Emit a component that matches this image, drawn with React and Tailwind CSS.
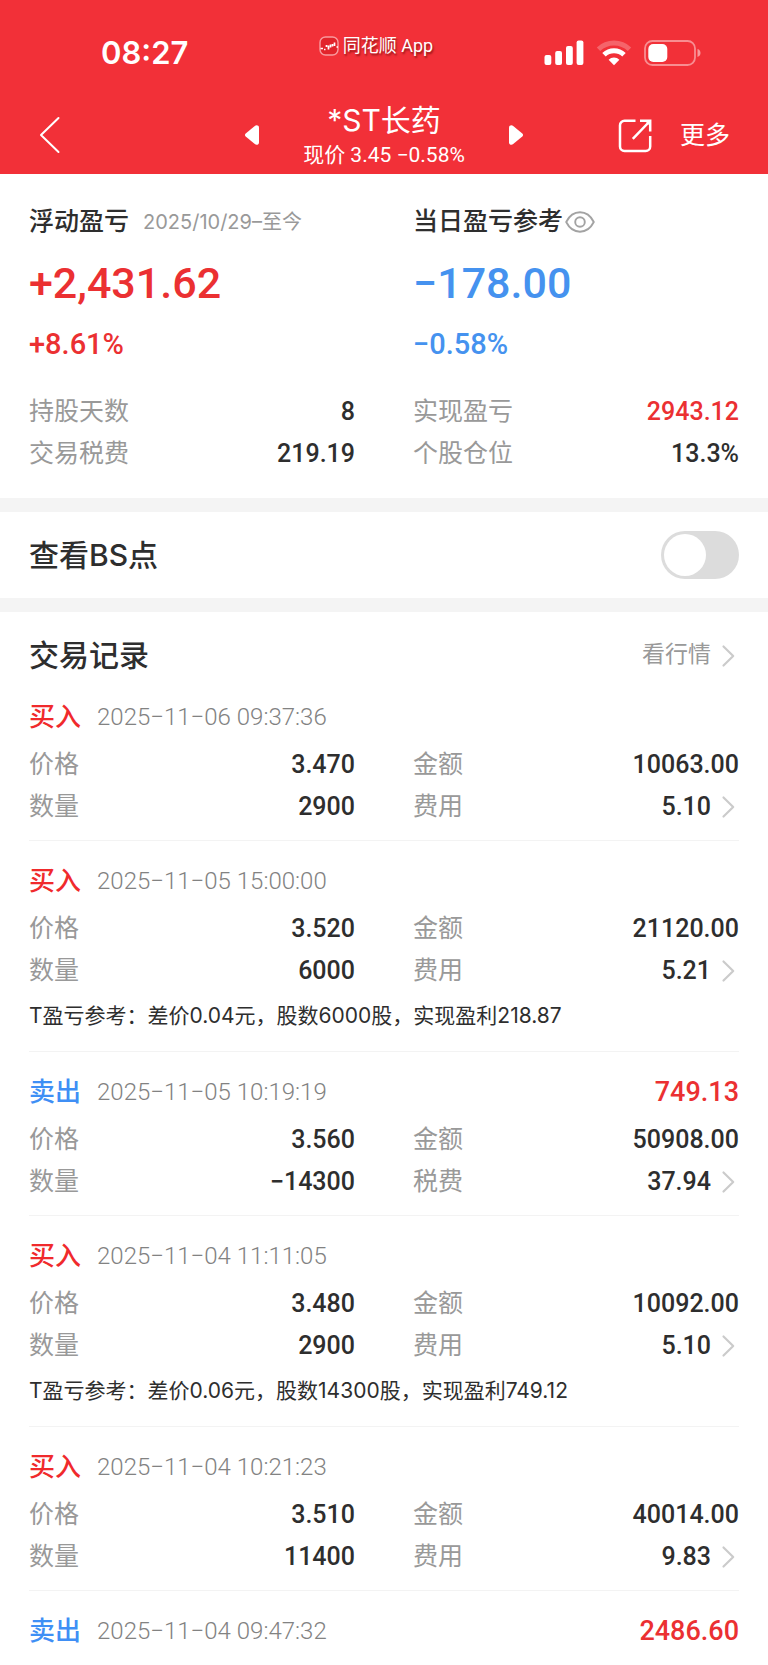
import React, { useState } from "react";

const BUY = "买入";
const SELL = "卖出";

const records = [
  { side: BUY, time: "2025−11−06 09:37:36", price: "3.470", count: "2900", amount: "10063.00", feeLabel: "费用", fee: "5.10" },
  { side: BUY, time: "2025−11−05 15:00:00", price: "3.520", count: "6000", amount: "21120.00", feeLabel: "费用", fee: "5.21", note: "T盈亏参考：差价0.04元，股数6000股，实现盈利218.87" },
  { side: SELL, time: "2025−11−05 10:19:19", profit: "749.13", price: "3.560", count: "−14300", amount: "50908.00", feeLabel: "税费", fee: "37.94" },
  { side: BUY, time: "2025−11−04 11:11:05", price: "3.480", count: "2900", amount: "10092.00", feeLabel: "费用", fee: "5.10", note: "T盈亏参考：差价0.06元，股数14300股，实现盈利749.12" },
  { side: BUY, time: "2025−11−04 10:21:23", price: "3.510", count: "11400", amount: "40014.00", feeLabel: "费用", fee: "9.83" },
  { side: SELL, time: "2025−11−04 09:47:32", profit: "2486.60" },
];

function Chevron() {
  return (
    <svg aria-hidden="true" className="h-6 w-6 shrink-0" viewBox="0 0 24 24" fill="none" stroke="#cbcbcb" strokeWidth="2.200">
      <path d="M8.500 2.500 18.200 12 8.500 21.500" strokeLinecap="round" strokeLinejoin="round" />
    </svg>
  );
}

function Item({ label, value, tone = "text-[#2e2e2e]", more = false }) {
  return (
    <div className="flex h-[42px] items-center justify-between text-[25px]">
      <dt className="text-[#999999]">{label}</dt>
      <dd className={`flex items-center gap-1 font-medium ${tone}`}>
        {value}
        {more && (
          <button type="button" aria-label="查看明细" className="flex">
            <Chevron />
          </button>
        )}
      </dd>
    </div>
  );
}

function StatusBar() {
  return (
    <div className="grid h-24 grid-cols-[1fr_auto_1fr] items-center pt-2.5">
      <div className="pl-[101px] font-['Inter',sans-serif] text-[31px] font-semibold leading-10">08:27</div>
      <div className="mr-4 flex items-center gap-1 self-start pt-[26px] text-[18px] leading-5 [text-shadow:1px_2px_2px_rgba(90,0,0,0.6)]">
        <svg aria-hidden="true" className="h-5 w-5" viewBox="0 0 20 20" fill="none">
          <rect x="1" y="1" width="18" height="18" rx="5.5" fill="#e2242b" stroke="#f99a9e" strokeWidth="1.4" />
          <path d="M1.500 12.500h2.500M5 13.500h1.500M7.500 9v2M9.500 9.500v4M11.500 8.500v3M13.500 8v2.500M15.500 6.500v3.500M17.500 11h1.500" stroke="#fff" strokeWidth="1.700" />
        </svg>
        <span>同花顺 App</span>
      </div>
      <div className="flex items-center justify-end gap-3 pr-[66px]">
        <svg aria-hidden="true" className="h-[26px] w-10" viewBox="0 0 40 26" fill="#fff">
          <rect x="0.500" y="15" width="6.800" height="10" rx="2" />
          <rect x="11.200" y="11" width="6.800" height="14" rx="2" />
          <rect x="22" y="6" width="6.800" height="19" rx="2" />
          <rect x="32.600" y="0.500" width="6.800" height="24.500" rx="2" />
        </svg>
        <svg aria-hidden="true" className="h-[26px] w-[36px]" viewBox="0 0 36 26" fill="none">
          <path d="M2.500 9.300a22.500 22.500 0 0 1 31 0" stroke="#fff" strokeOpacity="0.250" strokeWidth="5" />
          <path d="M8 14.800a14.500 14.500 0 0 1 20 0" stroke="#fff" strokeWidth="5" />
          <path d="M12.600 19.700a7.800 7.800 0 0 1 10.800 0L18 25.200Z" fill="#fff" />
        </svg>
        <svg aria-hidden="true" className="h-[26px] w-[58px]" viewBox="0 0 58 26" fill="none">
          <rect x="1" y="1" width="50" height="24" rx="7.500" stroke="#fff" strokeOpacity="0.450" strokeWidth="1.800" />
          <rect x="4.300" y="4" width="19" height="18" rx="5" fill="#fff" />
          <path d="M53.500 9v8c2-.6 3-2.200 3-4s-1-3.400-3-4Z" fill="#fff" fillOpacity="0.500" />
        </svg>
      </div>
    </div>
  );
}

function NavBar() {
  return (
    <nav className="grid h-[78px] grid-cols-[1fr_auto_1fr] items-center px-[38px]">
      <button type="button" aria-label="返回" className="justify-self-start">
        <svg className="h-[38px] w-6" viewBox="0 0 24 38" fill="none" stroke="#fff" strokeWidth="2">
          <path d="M20.500 2 3 19l17.500 17" strokeLinecap="round" strokeLinejoin="round" />
        </svg>
      </button>
      <div className="flex w-[280px] items-center justify-between">
        <button type="button" aria-label="上一只">
          <svg className="h-5 w-4" viewBox="0 0 16 20" fill="#fff">
            <path d="M1.700 8.500 10.800.9C12.400-.4 15 .4 15 2.600v14.800c0 2.200-2.600 3-4.200 1.700L1.700 11.500c-1-.9-1-2.100 0-3Z" />
          </svg>
        </button>
        <div className="pt-0.5 text-center">
          <h1 className="font-['Inter','Noto_Sans_CJK_SC',sans-serif] text-[30px] leading-[38px]">*ST长药</h1>
          <p className="text-[21px] leading-8">现价 3.45 −0.58%</p>
        </div>
        <button type="button" aria-label="下一只">
          <svg className="h-5 w-4" viewBox="0 0 16 20" fill="#fff">
            <path d="M14.300 8.500 5.200.9C3.600-.4 1 .4 1 2.600v14.800c0 2.200 2.600 3 4.200 1.700l9.100-7.600c1-.9 1-2.100 0-3Z" />
          </svg>
        </button>
      </div>
      <div className="flex items-center justify-end gap-7 pt-0.5">
        <button type="button" aria-label="分享">
          <svg className="h-[34px] w-[34px]" viewBox="0 0 34 34" fill="none" stroke="#fff" strokeWidth="2.500">
            <path d="M17.500 1.800H6.500a4.500 4.500 0 0 0-4.500 4.500v21.200a4.500 4.500 0 0 0 4.500 4.500h21.200a4.500 4.500 0 0 0 4.500-4.500V17" />
            <path d="M22 1.800h10.200V12.500M31.500 2.500 14.800 19.800" />
            <path d="M27 2h5v5Z" fill="#fff" stroke="none" />
          </svg>
        </button>
        <button type="button" className="text-[25px] leading-9">更多</button>
      </div>
    </nav>
  );
}

function Summary() {
  return (
    <section className="grid grid-cols-2 gap-x-[58px] px-[29px] pb-[23px] pt-[27px]">
      <div>
        <div className="flex h-[42px] items-center gap-3.5">
          <h2 className="text-[25px] font-medium text-[#2e2e2e]">浮动盈亏</h2>
          <span className="font-['Inter','Noto_Sans_CJK_SC',sans-serif] text-[20px] text-[#999999]">2025/10/29–至今</span>
        </div>
        <p className="mt-[10px] text-[43px] font-medium leading-[60px] text-[#eb3032]">+2,431.62</p>
        <p className="text-[29px] font-medium leading-[62px] text-[#eb3032]">+8.61%</p>
        <dl className="mt-4">
          <Item label="持股天数" value="8" />
          <Item label="交易税费" value="219.19" />
        </dl>
      </div>
      <div>
        <div className="flex h-[42px] items-center gap-0.5">
          <h2 className="text-[25px] font-medium text-[#2e2e2e]">当日盈亏参考</h2>
          <button type="button" aria-label="显示或隐藏">
            <svg className="h-[22px] w-[30px]" viewBox="0 0 30 22" fill="none" stroke="#a3a3a3" strokeWidth="1.900">
              <path d="M1.200 11C4.500 4.500 9.300 1.300 15 1.300S25.500 4.500 28.800 11C25.500 17.500 20.700 20.700 15 20.700S4.500 17.500 1.200 11Z" strokeLinejoin="round" />
              <circle cx="15" cy="11" r="4.800" />
            </svg>
          </button>
        </div>
        <p className="mt-[10px] text-[43px] font-medium leading-[60px] text-[#4592ef]">−178.00</p>
        <p className="text-[29px] font-medium leading-[62px] text-[#4592ef]">−0.58%</p>
        <dl className="mt-4">
          <Item label="实现盈亏" value="2943.12" tone="text-[#eb3032]" />
          <Item label="个股仓位" value="13.3%" />
        </dl>
      </div>
    </section>
  );
}

function Record({ record, last }) {
  return (
    <li className={`pt-[19px] ${last ? "" : "border-b border-[#f3f3f3] pb-3"}`}>
      <div className="flex h-[42px] items-center gap-4">
        <span className={`text-[26px] font-medium ${record.side === BUY ? "text-[#f02a2c]" : "text-[#3f8ff5]"}`}>{record.side}</span>
        <time className="text-[24px] font-light text-[#828282]">{record.time}</time>
        {record.profit && <span className="ml-auto text-[27px] font-medium text-[#eb3032]">{record.profit}</span>}
      </div>
      {record.price && (
        <dl className="mt-1.5 grid grid-cols-2 gap-x-[58px]">
          <Item label="价格" value={record.price} />
          <Item label="金额" value={record.amount} />
          <Item label="数量" value={record.count} />
          <Item label={record.feeLabel} value={record.fee} more />
        </dl>
      )}
      {record.note && (
        <p className="font-['Inter','Noto_Sans_CJK_SC',sans-serif] text-[21px] leading-[47px] text-[#2e2e2e]">{record.note}</p>
      )}
    </li>
  );
}

export default function App() {
  const [showPoints, setShowPoints] = useState(false);
  return (
    <div className="bg-white font-['Roboto','Noto_Sans_CJK_SC',sans-serif] text-[#2e2e2e]">
      <header className="bg-[#f23038] text-white">
        <StatusBar />
        <NavBar />
      </header>
      <main>
        <Summary />
        <section className="flex h-[114px] items-center justify-between border-y-[14px] border-[#f4f4f4] px-[29px]">
          <label htmlFor="bs-points" className="font-['Inter','Noto_Sans_CJK_SC',sans-serif] text-[30px] font-medium">查看BS点</label>
          <input
            id="bs-points"
            type="checkbox"
            role="switch"
            checked={showPoints}
            onChange={(e) => setShowPoints(e.target.checked)}
            className="flex h-12 w-[78px] appearance-none items-center rounded-full bg-[#dcdcdc] px-[3px] before:block before:h-[42px] before:w-[42px] before:rounded-full before:bg-white checked:justify-end checked:bg-[#eb3032]"
          />
        </section>
        <section className="px-[29px] pb-[13px] pt-[22px]">
          <div className="flex h-[43px] items-center justify-between">
            <h2 className="text-[30px] font-medium">交易记录</h2>
            <a href="#quotes" className="flex items-center gap-1 text-[23px] text-[#999999]">
              看行情
              <Chevron />
            </a>
          </div>
          <ul>
            {records.map((record, i) => (
              <Record key={record.time} record={record} last={i === records.length - 1} />
            ))}
          </ul>
        </section>
      </main>
    </div>
  );
}
